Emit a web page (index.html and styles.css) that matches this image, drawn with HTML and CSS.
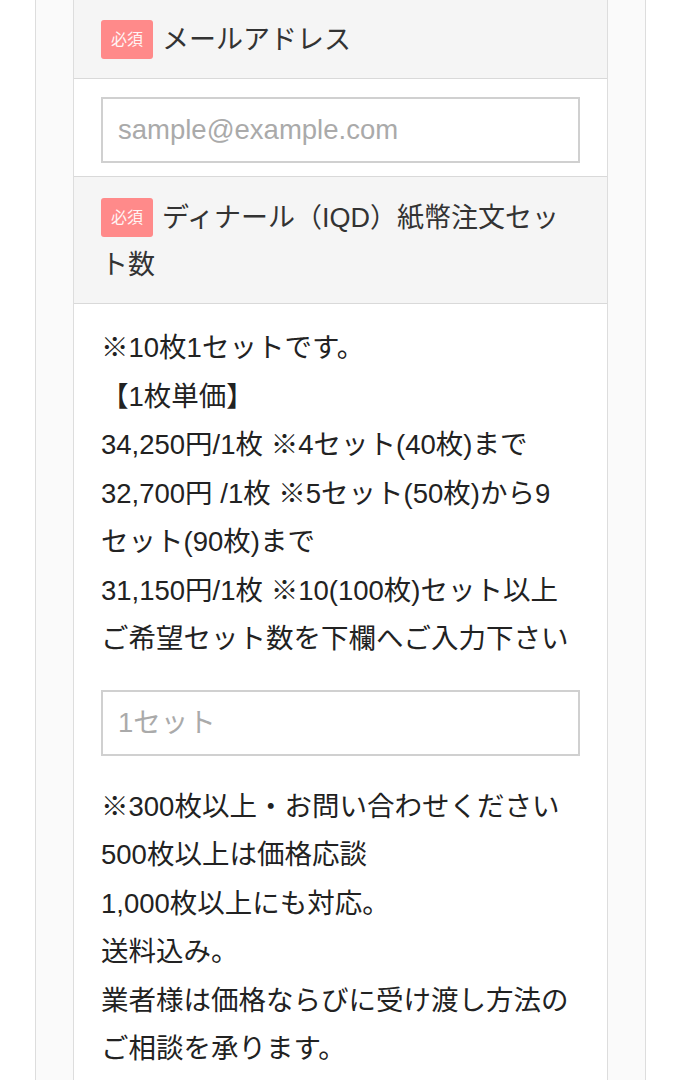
FILE: index.html
```html
<!DOCTYPE html>
<html lang="ja">

<head>
    <meta charset="UTF-8">
    <title>ご注文フォーム</title>
    <link rel="stylesheet" href="styles.css">
</head>

<body>
    <div class="wrap">
        <div class="form-table">
            <!-- メールアドレス -->
            <div class="form-head">
                <span class="req">必須</span>メールアドレス
            </div>
            <div class="form-body">
                <input type="email" class="field" placeholder="sample@example.com">
            </div>

            <!-- 注文セット数 -->
            <div class="form-head">
                <span class="req">必須</span>ディナール（IQD）紙幣注文セット数
            </div>
            <div class="form-body">
                <p class="note">
                    ※10枚1セットです。<br>
                    【1枚単価】<br>
                    34,250円/1枚 ※4セット(40枚)まで<br>
                    32,700円 /1枚 ※5セット(50枚)から9セット(90枚)まで<br>
                    31,150円/1枚 ※10(100枚)セット以上<br>
                    ご希望セット数を下欄へご入力下さい
                </p>
                <input type="text" class="field field-set" placeholder="1セット">
                <p class="note">
                    ※300枚以上・お問い合わせください<br>
                    500枚以上は価格応談<br>
                    1,000枚以上にも対応。<br>
                    送料込み。<br>
                    業者様は価格ならびに受け渡し方法のご相談を承ります。
                </p>
            </div>
        </div>
    </div>
</body>

</html>
```

FILE: styles.css
```css
body {
    margin: 0;
    background: #fff;
    color: #222;
    font-family: "Liberation Sans", "Noto Sans CJK JP", sans-serif;
}

.wrap {
    width: 535px;
    margin: -1px 0 0 35px;
    padding: 0 37px;
    background: #fafafa;
    border-left: 1px solid #ddd;
    border-right: 1px solid #ddd;
    min-height: 1200px;
}

.form-table {
    background: #fff;
    border-left: 1px solid #ddd;
    border-right: 1px solid #ddd;
}

.form-head {
    background: #f5f5f5;
    color: #333;
    font-size: 27px;
    line-height: 47px;
    padding: 18px 27px 14px;
    border-bottom: 1px solid #d9d9d9;
}

.req {
    display: inline-block;
    width: 52px;
    height: 39px;
    line-height: 39px;
    margin-right: 9px;
    border-radius: 3px;
    background: #ff8a8a;
    color: #fff4f4;
    font-size: 16px;
    text-align: center;
    vertical-align: 4px;
}

.form-body {
    padding: 18px 27px 13px;
    border-bottom: 1px solid #d9d9d9;
}

.field {
    display: block;
    box-sizing: border-box;
    width: 100%;
    height: 66px;
    margin: 0;
    padding: 0 15px;
    border: 2px solid #d0d0d0;
    background: #fff;
    font-family: inherit;
    font-size: 27.5px;
    color: #333;
}

.field::placeholder {
    color: #aaa;
}

.field-set {
    margin: 26px 0 27px;
}

.note {
    margin: 2px 5px 0 0;
    font-size: 27.5px;
    line-height: 48.5px;
}
```
